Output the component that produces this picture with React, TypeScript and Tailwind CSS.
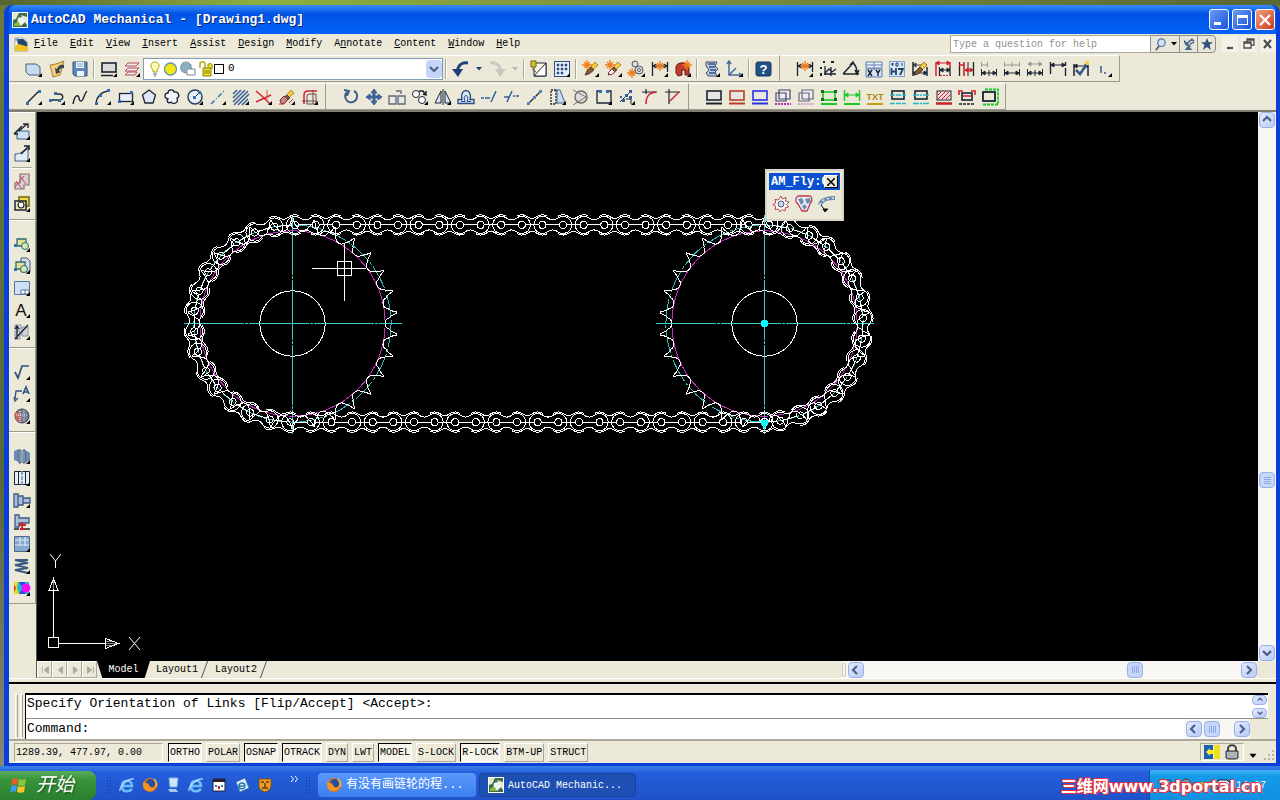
import type { ReactNode } from "react";
import clsx from "clsx";

const INK = "#1b2433";
const STEEL = "#6d8bb0";
const RED = "#cf2030";
const ORANGE = "#f07a18";
const GREEN = "#18c828";
const CYAN = "#28b8c8";

const spark = (x: number, y: number) => (
  <path
    d={`M${x - 5} ${y}h10M${x} ${y - 5}v10M${x - 3} ${y - 3}l6 6M${x - 3} ${y + 3}l6 -6`}
    stroke={ORANGE}
    strokeWidth="1.3"
  />
);

const pencil = (
  <>
    <path d="M6 12l8-9 3 3-9 8-3 1z" fill="#f7cf3c" stroke="#9a6a10" strokeWidth=".8" />
    <path d="M6 12l4-4 3 3-5 4-4 1z" fill="#8b5a2b" stroke={INK} strokeWidth=".7" />
  </>
);

const rectLine = (color: string) => (
  <>
    <rect x="3" y="4" width="14" height="9" fill="#e6e6e2" stroke={color} strokeWidth="1.6" />
    <path d="M2 16.5h16" stroke={color} strokeWidth="2" />
  </>
);

// horizontal dimension: an arrowed line from x1 to x2 at y
const dim = (y: number, x1: number, x2: number, color: string) => (
  <path
    d={`M${x1} ${y}H${x2}M${x1 + 3} ${y - 2}l-3 2 3 2zM${x2 - 3} ${y - 2}l3 2 -3 2z`}
    stroke={color}
    fill={color}
  />
);

const icons: Record<string, ReactNode> = {
  new: <path d="M2 5h10l4 3v8H5l-3-3z" fill="#c9dcef" stroke="#3f5f8c" />,
  open: (
    <>
      <path d="M3 6l6-1 8-3-4 14-7 2z" fill="#f4cf78" stroke="#a7803a" />
      <path d="M17 6c-4-1-6 1-7 4L8 9l1 6 5-2-2-1c0-2 2-3 5-3z" fill="#39465a" />
    </>
  ),
  save: (
    <>
      <path d="M3 3h14v14H5l-2-2z" fill="#5d86bd" stroke="#31547f" />
      <path d="M6 3h8v6H6zM7 12h7v5H7z" fill="#edf3fb" />
      <path d="M7 5h6M7 7h6" stroke="#8aa4c6" />
    </>
  ),
  plot: (
    <>
      <rect x="3" y="4" width="14" height="9" fill="#dcdcd6" stroke={INK} strokeWidth="1.6" />
      <path d="M2 16.5h12" stroke={INK} strokeWidth="1.5" />
    </>
  ),
  layers: (
    <path d="M6 4h11l-3 3H3zM6 9h11l-3 3H3zM6 13h9l-2 3H3z" fill="#f3eaea" stroke="#b5485a" />
  ),
  undo: (
    <>
      <path d="M17 4C11 3 7 6 6.500 12" stroke="#1f3f78" strokeWidth="3" />
      <path d="M1 10h11l-5 8z" fill="#1f3f78" />
    </>
  ),
  redo: (
    <>
      <path d="M3 4c6-1 10 2 10.500 8" stroke="#c9c8c0" strokeWidth="3" />
      <path d="M19 10H8l5 8z" fill="#c9c8c0" />
    </>
  ),
  match: (
    <>
      <path d="M5 4h12v13H5z" fill="#f8f6e6" stroke={INK} />
      <path d="M5 17L17 4v13z" fill="#fff" stroke={INK} />
      <path d="M2 2h5v6H2zM3 10l4 3" fill="#d3c628" stroke="#6c6410" />
    </>
  ),
  grid: (
    <>
      <rect x="2.5" y="2.5" width="15" height="15" fill="#e4edf8" stroke="#2f4f80" />
      <path
        d="M5 5h2v2H5zM9 5h2v2H9zM13 5h2v2h-2zM5 9h2v2H5zM9 9h2v2H9zM13 9h2v2h-2zM5 13h2v2H5zM9 13h2v2H9z"
        fill="#2f4f80"
        stroke="#2f4f80"
        strokeWidth=".5"
      />
    </>
  ),
  sparkPencil: (
    <>
      {spark(6, 6)}
      {pencil}
    </>
  ),
  sparkEraser: (
    <>
      {spark(6, 6)}
      {pencil}
      <path d="M4 14l4-4 3 3-4 3z" fill="#f6f0f0" stroke="#a34" />
    </>
  ),
  sparkGear: (
    <>
      {spark(5, 14)}
      <circle cx="8" cy="5" r="3" fill="#d8dde4" stroke="#555" />
      <circle cx="12" cy="11" r="4" fill="#d8dde4" stroke="#555" />
      <circle cx="12" cy="11" r="1.5" fill="#fff" stroke="#555" />
    </>
  ),
  sparkDim: (
    <>
      <path d="M2.5 3v14M17.5 3v10" stroke={INK} strokeWidth="1.3" />
      {dim(7, 3, 17, INK)}
      {spark(10, 7)}
    </>
  ),
  sparkBlock: (
    <>
      <path d="M3 8c0-5 12-6 13 0v8h-4v-5H9v5l-4 1-2-3z" fill="#c23a2c" stroke="#5e1a14" />
      {spark(14, 6)}
    </>
  ),
  script: (
    <>
      <path d="M4 3h11l-2 4 3 3-3 3 2 4H6l-2-3 3-3-3-4z" fill="#b9cbe2" stroke="#446" />
      <path d="M6 5h7M7 8h6M8 11h6M7 14h6" stroke="#2f4f80" strokeWidth="1.3" />
    </>
  ),
  ucs: <path d="M4 3v13h11M4 16l7-7M2 5l2-3 2 3M14 14l3 2-3 2" stroke="#426b9c" strokeWidth="1.5" />,
  help: (
    <>
      <rect x="2" y="3" width="15" height="14" rx="2" fill="#215082" stroke="#12365e" />
      <text x="9.5" y="14.5" textAnchor="middle" fontSize="13" fontWeight="700" fill="#fff" className="font-['Liberation_Sans',sans-serif]">
        ?
      </text>
    </>
  ),
  ordinate: (
    <>
      <path d="M7 7v9M6 15h12M7 14l4-4 3 3 4-3M13 8v9" stroke={INK} strokeWidth="1.3" />
      <path d="M5 3h2M13 3h3M3 8v2M3 14v3" stroke={INK} strokeWidth="2" />
    </>
  ),
  angle: <path d="M2 15h16M2 15L12 4c3 2 4 6 4 11M9 6l3-3 2 4M14 11l2 4 2-4" stroke={INK} strokeWidth="1.5" />,
  xy: (
    <>
      <path d="M2 3h16v6H2zM2 6h16M10 3v6" fill="#eef4fc" stroke="#5a7fb2" />
      <path d="M2 10h16v8H2z" fill="#d4e2f3" stroke="#5a7fb2" />
      <path d="M4 11l4 6M8 11l-4 6M12 11l2 3 2-3M14 14v3" stroke={INK} strokeWidth="1.4" />
    </>
  ),
  h7: (
    <>
      <rect x="2.5" y="2.5" width="15" height="15" fill="#d9e6f5" stroke="#86a4cb" />
      <path d="M4 5h3M5.5 4v3M9 4h2v3H9zM15 4v3" stroke="#26456f" />
      <path d="M4.5 9v7M9 9v7M5 12.5h4M11 10h5l-3 6" stroke="#26456f" strokeWidth="1.8" />
    </>
  ),
  dimEdit: (
    <>
      <path d="M3 3v14M17 8v9" stroke={INK} strokeWidth="1.5" />
      {dim(6, 3, 17, "#444")}
      {dim(14, 3, 17, INK)}
      {pencil}
    </>
  ),
  dimRedTop: (
    <>
      <path d="M3 3v14M17 3v5" stroke={RED} strokeWidth="1.5" />
      {dim(4, 3, 17, RED)}
      {dim(11, 7, 17, INK)}
      <path d="M6.5 8v9M17 8v9" stroke={INK} strokeWidth="1.3" />
      <path d="M7 16.5h9" stroke={RED} strokeDasharray="2 1" />
    </>
  ),
  dimRedMid: (
    <>
      <path d="M3.5 3v14M17.5 3v14" stroke={INK} strokeWidth="1.3" />
      <path d="M8 3v14M3 6h5" stroke={RED} strokeWidth="1.6" />
      <path d="M12 3v14" stroke={INK} />
      {dim(11, 9, 17, RED)}
    </>
  ),
  dimJoinA: (
    <>
      <path d="M2.5 10v7M17.5 10v7M10 11v6" stroke={INK} />
      <path d="M2.5 3v5M8.500 3v5M3 6h5" stroke="#999" />
      {dim(14, 3, 17, INK)}
    </>
  ),
  dimJoinB: (
    <>
      <path d="M2.5 10v7M17.5 10v7" stroke={INK} />
      <path d="M2.5 3v5M10 3v5M17.5 3v5M3 6h14" stroke="#999" />
      {dim(14, 3, 17, INK)}
    </>
  ),
  dimJoinC: (
    <>
      <path d="M2.5 10v7M17.5 10v7M10 11v6" stroke={INK} />
      {dim(5, 3, 17, "#999")}
      {dim(14, 3, 17, INK)}
    </>
  ),
  dimOpen: (
    <>
      <path d="M2.5 3v12M17.5 3v4M17.5 9v8" stroke={INK} strokeWidth="1.4" />
      {dim(6, 3, 17, INK)}
    </>
  ),
  dimCheck: (
    <>
      <path d="M3 5v12M17 5v12" stroke={INK} strokeWidth="1.5" />
      {dim(7, 3, 17, INK)}
      <path d="M5 11l4 4 7-10" stroke="#34598c" strokeWidth="2.6" />
      <path d="M14 2h4v4h-3z" fill="#f4cf3c" />
    </>
  ),
  corner: <path d="M7 7v7M10 14h2" stroke="#34598c" strokeWidth="1.5" />,
  line: (
    <>
      <path d="M3 16L15 4" stroke={INK} strokeWidth="1.4" />
      <path d="M2 15h3v3H2zM14 3h3v3h-3z" fill="#2f6fb5" />
    </>
  ),
  polyline: (
    <>
      <path d="M4 13h8c5 0 5-6 0-6H8" stroke={INK} strokeWidth="1.4" />
      <path d="M2 12h3v3H2zM11 12h3v3h-3zM7 5h3v3H7z" fill="#2f6fb5" />
    </>
  ),
  spline: <path d="M3 17c1-6 3-9 5-8s0 5 3 5 3-8 6-10" stroke={INK} strokeWidth="1.4" />,
  arc: (
    <>
      <path d="M3 16c1-7 5-11 12-12" stroke={INK} strokeWidth="1.4" />
      <path d="M2 15h3v3H2zM6 7h3v3H6zM14 2h3v3h-3z" fill="#2f6fb5" />
    </>
  ),
  rect: (
    <>
      <rect x="3.5" y="6.5" width="13" height="8" fill="#e8eff8" stroke={INK} strokeWidth="1.3" />
      <path d="M2 13h3v3H2zM14 4h3v3h-3z" fill="#2f6fb5" />
    </>
  ),
  polygon: <path d="M10 3l6.5 5-2.5 8H6L3.500 8z" fill="#dce8f6" stroke={INK} strokeWidth="1.3" />,
  cloud: (
    <path d="M6 12c-4-1-4-6 0-6 0-4 6-4 6-1 5-1 6 5 3 6 2 5-4 7-6 4-3 2-5-1-3-3z" fill="#f2f5fa" stroke={INK} strokeWidth="1.3" />
  ),
  circle: (
    <>
      <circle cx="10" cy="10" r="7" fill="#e8eff8" stroke="#27405f" strokeWidth="1.5" />
      <path d="M10 10l4-4" stroke={INK} />
      <path d="M8 9h3v3H8zM13 4h3v3h-3z" fill="#2f6fb5" />
    </>
  ),
  construction: <path d="M3 17L17 3" stroke="#2f6fb5" strokeWidth="1.4" strokeDasharray="5 2 1 2" />,
  hatch: <path d="M2 7l4-4M2 11l8-8M2 15l12-12M3 18L17 4M7 18L18 7M11 18l6-6" stroke="#3e6598" strokeWidth="1.6" />,
  trim: (
    <>
      <path d="M2 4l7 6 7 7M2 15l15-7" stroke={RED} strokeWidth="1.5" />
      <path d="M13 3v12" stroke="#d66" strokeWidth="1.2" />
    </>
  ),
  eraser: (
    <>
      {pencil}
      <path d="M3 13l4-4 4 3-4 5-3-1z" fill="#c88" stroke="#733" />
      <path d="M2 17h5M12 16l4-4" stroke={RED} />
    </>
  ),
  fillet: (
    <>
      <path d="M4 17V8c0-3 2-4 4-4h9" stroke={RED} strokeWidth="1.5" />
      <path d="M7 17V8l2-1h7v10zM2 14h15M13 3v14" stroke="#6b4a4a" />
    </>
  ),
  rotate: <path d="M6 5a6 6 0 1 0 7 -1M3 3l5 1-2 5" stroke="#3e5f87" strokeWidth="2" />,
  move: <path d="M10 2l3 4h-2v3h3V7l4 3-4 3v-2h-3v3h2l-3 4-3-4h2v-3H6v2l-4-3 4-3v2h3V6H7z" fill="#3e6598" stroke="#3e6598" />,
  scale: <path d="M2 9h7v8H2zM11 9h7v8h-7zM9 4h5v3" fill="#e9e9e4" stroke="#5c6778" strokeWidth="1.3" />,
  copy: (
    <>
      <circle cx="6" cy="7" r="3.5" fill="#fff" stroke={INK} />
      <circle cx="12" cy="13" r="3.5" fill="#fff" stroke={INK} />
      <path d="M9 4h4l2 3M13 7l3 1V4" stroke={INK} strokeWidth="1.4" />
    </>
  ),
  mirror: <path d="M8 4v12H2zM12 4v12h6zM10 2v16" fill="#d8e4f3" stroke={INK} />,
  offset: (
    <>
      <path d="M2 16.500h16v-4h-4c3-12-11-12-8 0H2z" fill="#d8e4f3" stroke="#2c4f80" strokeWidth="1.4" />
      <path d="M5 14.500h4c-3-8 5-8 2 0h4" stroke="#2c4f80" />
    </>
  ),
  extend: <path d="M2 11h3M6 11h5M12 15L17 4" stroke="#2f5f9c" strokeWidth="1.5" />,
  breakLine: <path d="M2 10h5M11 9h2M14 9h3M5 15L10 4" stroke="#2f5f9c" strokeWidth="1.5" />,
  stretch: (
    <>
      <path d="M3 17L16 4" stroke={INK} strokeWidth="1.3" />
      <path d="M2 15h3v3H2zM14 3h3v3h-3zM8 9h3v3H8z" fill="#5a82b8" />
    </>
  ),
  taper: (
    <>
      <path d="M8 3H3v14h5z" stroke={INK} strokeDasharray="2 1" strokeWidth="1.3" />
      <path d="M9 3h3l5 13H9z" fill="#cfdcec" stroke="#3e6598" />
    </>
  ),
  trimCircle: (
    <>
      <circle cx="10" cy="10" r="6" fill="#ddd" stroke="#666" strokeWidth="1.3" />
      <path d="M2 3l13 7-13 8" stroke="#777" />
    </>
  ),
  box: (
    <>
      <path d="M6 4H3v12h14V4h-3" stroke={INK} strokeWidth="1.3" />
      <path d="M5 3h3v3H5zM12 3h3v3h-3z" fill="#2f6fb5" />
    </>
  ),
  explode: (
    <>
      <path d="M3 15L14 4M9 12h5v5" stroke={INK} />
      <path d="M5 12h3v3H5zM8 7h3v3H8zM12 9h3v3h-3zM3 9h2v2H3zM12 3h3v3h-3z" fill="#2f5f9c" />
    </>
  ),
  filletArc: (
    <>
      <path d="M2 5h15M6 2v5" stroke={INK} strokeWidth="1.2" />
      <path d="M6 17C6 9 9 6 16 5" stroke={RED} strokeWidth="1.5" />
    </>
  ),
  chamfer: (
    <>
      <path d="M2 5h15M6 2v15" stroke={INK} strokeWidth="1.2" />
      <path d="M7 14l9-9" stroke={RED} strokeWidth="1.5" />
    </>
  ),
  rectBlack: rectLine(INK),
  rectRed: rectLine("#b8402c"),
  rectBlue: rectLine("#2c30e0"),
  rectPurple: (
    <>
      <path d="M6 3h11v9H6zM3 6h10v8H3z" fill="#eee" stroke="#446" strokeWidth="1.2" />
      <path d="M2 17h16" stroke="#b030c0" strokeWidth="2" strokeDasharray="2 1" />
    </>
  ),
  rectGrey: (
    <>
      <path d="M6 3h11v9H6zM3 6h10v8H3z" fill="#eee" stroke="#667" strokeWidth="1.2" />
      <path d="M2 17h16" stroke="#c060d0" strokeDasharray="2 1" />
    </>
  ),
  rectGreen: (
    <>
      <rect x="4" y="5" width="12" height="8" stroke={GREEN} strokeWidth="1.6" />
      <path d="M2 3h3v3H2zM15 3h3v3h-3zM2 11h3v3H2zM15 11h3v3h-3z" fill="#156820" />
      <path d="M2 17h16" stroke={GREEN} strokeWidth="2" />
    </>
  ),
  dimGreen: (
    <>
      <path d="M2.5 3v11M17.5 3v11" stroke={GREEN} strokeWidth="1.5" />
      {dim(8, 3, 17, GREEN)}
      <path d="M2 17h16" stroke={GREEN} strokeWidth="2" />
    </>
  ),
  txt: (
    <>
      <text x="10" y="13" textAnchor="middle" fontSize="9" fontWeight="700" fill="#a88c10" className="font-['Liberation_Sans',sans-serif]">
        TXT
      </text>
      <path d="M2 17h16" stroke="#c0a010" strokeWidth="2" />
    </>
  ),
  centerA: (
    <>
      <rect x="4" y="4" width="12" height="8" stroke={INK} strokeWidth="1.6" />
      <path d="M2 8h16M2 16.500h16" stroke={CYAN} strokeWidth="1.6" strokeDasharray="5 1" />
    </>
  ),
  centerB: (
    <>
      <rect x="4" y="4" width="12" height="8" stroke={INK} strokeWidth="1.6" />
      <path d="M2 8h16M2 16.500h16" stroke={CYAN} strokeWidth="1.6" strokeDasharray="6 1 2 1" />
    </>
  ),
  hatchRed: (
    <>
      <rect x="3" y="4" width="14" height="9" fill="#f4dada" stroke={INK} />
      <path d="M4 12l7-7M8 12l7-7M12 12l4-4M4 8l3-3" stroke={RED} />
      <path d="M2 16.5h16" stroke={RED} strokeWidth="2.5" />
    </>
  ),
  dimRed: (
    <>
      <rect x="5" y="6" width="10" height="7" stroke={INK} strokeWidth="1.6" />
      <path d="M2 3v5M18 3v5M3 4h3M14 4h3M6 9h8" stroke={RED} strokeWidth="1.6" />
      <path d="M2 17h16" stroke={INK} strokeDasharray="3 1" strokeWidth="1.6" />
    </>
  ),
  viewport: (
    <>
      <rect x="3" y="5" width="12" height="9" stroke={INK} strokeWidth="1.8" />
      <path d="M5 2.500h13v15H3" stroke={GREEN} strokeWidth="1.8" strokeDasharray="3 1" />
    </>
  ),
  viewA: (
    <>
      <path d="M5 9h12v8H5z" fill="#cfe0f2" stroke="#3e5f87" />
      <path d="M2 12l8-8M7 9l8-7M2 12h4M11 2h5v4" stroke={INK} strokeWidth="1.4" />
    </>
  ),
  viewB: (
    <>
      <path d="M3 10c7 0 8-4 13-5v12H3z" fill="#e4edf7" stroke="#3e5f87" />
      <path d="M9 10l7-7M12 2h5v4" stroke={INK} strokeWidth="1.6" />
    </>
  ),
  blocks: (
    <>
      <path d="M8 2h9v11h-5v4H3v-6h5z" fill="#d8cfd6" stroke="#8d7078" strokeWidth="1.2" />
      <path d="M4 9l6 8M8 4l6 8M3 15l9-11" stroke="#c0485a" />
    </>
  ),
  detail: (
    <>
      <path d="M7 3h10v9H7z" fill="#e9dc50" stroke="#6c6410" strokeWidth="1.5" />
      <path d="M3 7h11v9H3z" fill="#f3edb0" stroke={INK} strokeWidth="1.5" />
      <circle cx="9" cy="11" r="3" fill="#fff" stroke={INK} strokeWidth="1.2" />
    </>
  ),
  insertBlock: (
    <>
      <path d="M5 5h9v7H5z" fill="#e6df9a" stroke="#276c74" strokeWidth="1.3" />
      <circle cx="13" cy="12" r="3.5" fill="#dbe6b0" stroke="#276c74" />
      <path d="M2 10h3v3H2z" fill="#2f6fb5" />
    </>
  ),
  makeBlock: (
    <>
      <path d="M9 2h6l3 3v11H9z" fill="#cfdff2" stroke="#557" />
      <path d="M4 6h9v7H4z" fill="#e6df9a" stroke="#276c74" strokeWidth="1.3" />
      <circle cx="12" cy="13" r="3.5" fill="#dbe6b0" stroke="#276c74" />
      <path d="M2 12h3v3H2z" fill="#2f6fb5" />
    </>
  ),
  sheet: (
    <>
      <path d="M2.5 3.5h15v13h-15z" fill="#cfe0f4" stroke="#55779f" />
      <path d="M9 12h8v4H9zM13 12v4" fill="#fff" stroke="#55779f" />
    </>
  ),
  letterA: (
    <text x="9" y="16" textAnchor="middle" fontSize="17" fill="#111" className="font-['Liberation_Sans',sans-serif]">
      A
    </text>
  ),
  table: (
    <>
      <path d="M3 3h6v4H3zM10 5h6v9h-6zM3 9h5v8H3z" fill="#cfd6de" stroke="#8d97a5" />
      <path d="M3 17L16 3M5 5v12M3 7l2-3 2 3" stroke={INK} strokeWidth="1.3" />
    </>
  ),
  surface: <path d="M3 10l3 6L10 4h7" stroke="#33507c" strokeWidth="1.7" />,
  leader: (
    <>
      <path d="M3 15l1-8h6M2 13l1 4 3-3" stroke="#33507c" strokeWidth="1.3" />
      <path d="M11 10l3-7 3 7M12 8h4" stroke="#33507c" strokeWidth="1.6" />
    </>
  ),
  partRef: (
    <>
      <circle cx="10" cy="10" r="7" fill="#6f7f97" stroke="#39435a" />
      <path d="M2 8l6-4 2 13-6-3z" fill="#d6685c" opacity=".8" />
      <path d="M8 5v12M12 4v12M4 9h12" stroke="#e8edf5" strokeDasharray="1 1" />
    </>
  ),
  bolt: (
    <>
      <path d="M2 5l5-2v13l-5-2zM13 4l5 3v7l-5 3z" fill={STEEL} />
      <path d="M7 4h2v13H7zM11 4h2v13h-2z" fill="#b9cbe2" stroke="#3c5a82" />
    </>
  ),
  hole: (
    <>
      <path d="M2.5 3.500h15v13h-15z" fill="#e9eef5" stroke={INK} />
      <path d="M6.500 3v14M13.500 3v14" stroke={INK} />
      <path d="M10 3v14" stroke={STEEL} strokeWidth="1.5" strokeDasharray="4 1" />
    </>
  ),
  screw: <path d="M2 4h4v2h5v2h7v5h-7v2H6v2H2zM6 6v9M11 8v5" fill="#a9bfdb" stroke="#3c5a82" strokeWidth="1.3" />,
  pin: (
    <>
      <path d="M3 3h4v3h10v5H7v4H3z" fill="#a9bfdb" stroke="#3c5a82" strokeWidth="1.3" />
      <path d="M2 17h5M13 17h5" stroke={INK} strokeWidth="1.3" />
      <path d="M10 10v7M7 13h7M8 17h5" stroke={RED} strokeWidth="1.8" />
    </>
  ),
  steel: (
    <>
      <path d="M2.5 2.500h15v15h-15z" fill="#8aa8cc" stroke="#4a6a92" />
      <path d="M3 6h14M3 11h14M8 3v9M13 3v9" stroke="#dce8f6" strokeWidth="1.2" />
    </>
  ),
  spring: <path d="M3 4l13 3L3 9l13 3-13 2 13 3M3 4h13" stroke="#3c5a82" strokeWidth="2" />,
  fea: (
    <>
      <path d="M2 4h15v12H2z" fill="#20b8d8" />
      <path d="M2 4h4l-1 6 2 6H2z" fill="#f0d820" />
      <path d="M2 7l2 3-2 4z" fill="#d03020" />
      <path d="M7 16l4-6-4-6h6v12z" fill="#2848d8" />
      <circle cx="14" cy="10" r="4.5" fill="#f010f0" />
    </>
  ),
  sprocket: (
    <>
      <path
        d="M10 2l1.500 3 3.500-1.500-.5 3.500 3.500 1-2.500 2.500 2 2.500-3.200.7-.3 3.300-2.800-1.500-2.200 2.500-1.500-3-3.500.5.800-3.300-3-1.700 3-1.500-.8-3.500 3.300.5z"
        fill="#fff"
        stroke="#b04848"
      />
      <circle cx="10" cy="10" r="3" fill="#c8d8ea" stroke="#557" />
    </>
  ),
  belt: (
    <>
      <path d="M4 2h12c3 2 2 6 0 8l-3 7H8L4 10C1 8 1 4 4 2z" fill="#e8eef6" stroke="#c03848" strokeWidth="1.3" />
      <path d="M4 5l4-1 2 4-3 3zM11 5l5-1 1 4-4 2zM8 12l3-2 2 3-3 3z" fill="#6d8bb0" />
    </>
  ),
  chain: (
    <>
      <path d="M3 11C4 6 9 4 18 4" stroke="#6d8bb0" strokeWidth="4" />
      <path d="M3 11C4 6 9 4 18 4" stroke="#dfe9f7" strokeWidth="1.5" strokeDasharray="2 3" />
      <path d="M4 11l3 4M6 15h5l-3 3z" stroke="#111" fill="#111" />
    </>
  ),
};

const flyouts = new Set(
  (
    "new plot layers grid sparkPencil sparkEraser sparkGear sparkDim sparkBlock script ucs corner line polyline arc rect " +
    "circle construction hatch trim eraser fillet copy mirror taper box explode viewA viewB detail insertBlock makeBlock " +
    "sheet letterA table surface leader partRef bolt hole screw steel spring fea"
  ).split(" "),
);

function ToolIcon({ name }: { name: string }) {
  return (
    <svg viewBox="0 0 20 20" className="block size-5" fill="none" aria-hidden="true">
      {icons[name]}
      {flyouts.has(name) && <path d="M18 14v4h-4z" fill="#000" />}
    </svg>
  );
}

function ToolButton({ name, vertical }: { name: string; vertical?: boolean }) {
  return (
    <button
      type="button"
      aria-label={name}
      className={clsx("flex shrink-0 items-center justify-center", vertical ? "h-[22px] w-6" : "h-6 w-[23px]")}
    >
      <ToolIcon name={name} />
    </button>
  );
}

function Divider() {
  return <span className="mx-[2px] h-5 w-[2px] shrink-0 border-l border-[#aca899] bg-white" />;
}

function Toolbar({ children }: { children: ReactNode }) {
  return (
    <div className="flex h-[27px] items-center border-t border-r border-b border-t-white border-r-[#9d9a8c] border-b-[#9d9a8c] pr-1 pl-[13px]">
      {children}
    </div>
  );
}

const tools = (names: string) => names.split(" ").map((n) => <ToolButton key={n} name={n} />);

function Caret({ className }: { className?: string }) {
  return (
    <svg viewBox="0 0 6 4" className={clsx("h-1 w-1.5", className)} fill="currentColor" aria-hidden="true">
      <path d="M0 0h6L3 3.500z" />
    </svg>
  );
}

function LayerSelect() {
  return (
    <div className="flex h-[22px] w-[300px] shrink-0 items-center border border-[#7f9db9] bg-white pl-1">
      <svg viewBox="0 0 66 18" className="h-[18px] w-[66px] shrink-0" fill="none" aria-hidden="true">
        <path d="M7 2c5 0 5 5 2 8v2H5v-2C2 7 2 2 7 2z" fill="#fff9b0" stroke="#a8a020" />
        <path d="M5 14h4M6 16h2" stroke="#666" />
        <circle cx="22.500" cy="9" r="6" fill="#f2e818" stroke="#6a94a8" strokeWidth="1.3" />
        <circle cx="38" cy="7.500" r="5.500" fill="#8ab0c0" stroke="#5b7f90" strokeDasharray="2 1" />
        <path d="M41 9h6v6h-8v-3" fill="#fff" stroke="#789" />
        <path d="M52 8V4c0-3 5-3 5 0v4" stroke="#b8a820" strokeWidth="1.6" />
        <path d="M55 8h8v8h-8zM60 8V5c0-2 4-2 4 0v4" fill="#f0e020" stroke="#8a8010" />
        <path d="M56 11h6M56 13h6" stroke="#8a8010" />
      </svg>
      <span className="size-[10px] shrink-0 border border-black bg-white" />
      <select
        aria-label="Layer"
        className="h-full min-w-0 flex-1 appearance-none bg-transparent pl-1 text-[11px] leading-none text-black outline-none"
        defaultValue="0"
      >
        <option>0</option>
      </select>
      <span className="pointer-events-none flex h-[18px] w-4 items-center justify-center rounded-sm bg-[#c4d4fb]">
        <Chevron dir="down" />
      </span>
    </div>
  );
}

const chevrons = {
  up: "M1 6l4-4 4 4",
  down: "M1 3l4 4 4-4",
  left: "M6 1L2 5l4 4",
  right: "M3 1l4 4-4 4",
};

function Chevron({ dir, small }: { dir: keyof typeof chevrons; small?: boolean }) {
  return (
    <svg viewBox="0 0 10 10" className={small ? "size-[6px]" : "size-[10px]"} fill="none" aria-hidden="true">
      <path d={chevrons[dir]} stroke="#4d6185" strokeWidth="2.2" />
    </svg>
  );
}

function ScrollButton({ dir, small }: { dir: keyof typeof chevrons; small?: boolean }) {
  return (
    <button
      type="button"
      aria-label={`Scroll ${dir}`}
      className={clsx(
        "flex shrink-0 items-center justify-center rounded-sm border border-[#98b0e8] bg-linear-to-br from-[#e3ebfe] to-[#b9cbf8]",
        small ? "h-[10px] w-[15px]" : "size-4",
      )}
    >
      <Chevron dir={dir} small={small} />
    </button>
  );
}

function Thumb({ vertical }: { vertical?: boolean }) {
  return (
    <span className="flex size-4 shrink-0 items-center justify-center rounded-sm border border-[#98b0e8] bg-[#c8d6fb]">
      <span className={clsx("flex gap-px", vertical && "flex-col")}>
        {[0, 1, 2, 3].map((i) => (
          <span key={i} className={clsx("bg-[#8ca8e8]", vertical ? "h-px w-[7px]" : "h-[7px] w-px")} />
        ))}
      </span>
    </span>
  );
}

function AppIcon() {
  return (
    <svg viewBox="0 0 16 16" className="size-4 shrink-0" aria-hidden="true">
      <rect width="16" height="16" fill="#fff" />
      <rect x="1" y="1" width="14" height="14" fill="#3f6a50" />
      <path d="M1 1h6l-3 6-3 1zM9 3l6 2v8l-4-5z" fill="#dfeacb" />
      <path d="M6 6c3-2 7 0 7 4l-4 4-4-3z" fill="#f1f5ee" />
      <path d="M2 12l4-3 3 5H2z" fill="#8ab83c" />
    </svg>
  );
}

// label and index of its underlined access key
const menus: [string, number][] = [
  ["File", 0],
  ["Edit", 0],
  ["View", 0],
  ["Insert", 0],
  ["Assist", 0],
  ["Design", 0],
  ["Modify", 0],
  ["Annotate", 1],
  ["Content", 0],
  ["Window", 0],
  ["Help", 0],
];

function TitleBar() {
  const control = "flex h-[21px] w-5 items-center justify-center rounded-[3px] border border-white";
  return (
    <header className="flex h-[29px] shrink-0 items-center rounded-t-md bg-linear-to-b from-[#3a8cf8] via-[#0053e4] via-30% to-[#0262fb] pr-px pl-[3px]">
      <AppIcon />
      <h1 className="ml-[3px] flex-1 truncate text-[13px] font-bold text-white [text-shadow:1px_1px_#0a246a]">
        AutoCAD Mechanical - [Drawing1.dwg]
      </h1>
      <div className="flex gap-[3px]">
        <button type="button" aria-label="Minimize" className={clsx(control, "bg-linear-to-br from-[#6a9bf8] to-[#1c4fd8]")}>
          <span className="mt-2 mr-1 h-[3px] w-[7px] bg-white" />
        </button>
        <button type="button" aria-label="Maximize" className={clsx(control, "bg-linear-to-br from-[#6a9bf8] to-[#1c4fd8]")}>
          <span className="h-[10px] w-[11px] border border-t-[3px] border-white" />
        </button>
        <button type="button" aria-label="Close" className={clsx(control, "bg-linear-to-br from-[#f0a080] to-[#c8371a]")}>
          <svg viewBox="0 0 12 12" className="size-3" stroke="#fff" strokeWidth="2.2">
            <path d="M1 1l10 10M11 1L1 11" />
          </svg>
        </button>
      </div>
    </header>
  );
}

function MenuBar() {
  return (
    <nav className="flex h-5 shrink-0 items-center bg-[#ece9d8] pl-[5px]">
      <svg viewBox="0 0 16 16" className="mr-[5px] size-[15px]" aria-hidden="true">
        <path d="M1 1h9l4 4v10H1z" fill="#fff" stroke="#9aa" />
        <path d="M4 2h6l4 4v6H4z" fill="#26466e" />
        <path d="M1 10c5-5 7 0 14 0v5H1z" fill="#f2c224" />
        <path d="M1 3h5M3.500 1v5" stroke="#2f6fb5" />
      </svg>
      <div className="flex flex-1 gap-3">
        {menus.map(([label, key]) => (
          <button key={label} type="button" className="text-[10px] leading-4">
            {label.slice(0, key)}
            <span className="underline">{label[key]}</span>
            {label.slice(key + 1)}
          </button>
        ))}
      </div>
      <input
        aria-label="Type a question for help"
        placeholder="Type a question for help"
        className="h-[18px] w-[200px] border border-r-0 border-[#aca899] bg-white px-[2px] text-[10px] outline-none placeholder:text-[#8f8f8f]"
      />
      <div className="flex h-[18px] rounded-r-sm border border-[#8f8f8a] bg-[#e9e7da]">
        <button type="button" aria-label="Search" className="flex w-7 items-center justify-center gap-1">
          <svg viewBox="0 0 14 14" className="size-[13px]" fill="none" aria-hidden="true">
            <path d="M2 13l4-5" stroke="#667" strokeWidth="2" />
            <circle cx="8" cy="5" r="4" fill="#cfe2f8" stroke="#5577a5" strokeWidth="1.3" />
          </svg>
          <Caret />
        </button>
        <button type="button" aria-label="Communication center" className="flex w-[18px] items-center justify-center border-l border-[#8f8f8a]">
          <svg viewBox="0 0 14 14" className="size-3" fill="none" aria-hidden="true">
            <path d="M1 2c0 6 4 9 9 8zM7 10l4 4H2l3-4z" fill="#4b648a" />
            <path d="M5 6l6-5M8 7l5-2M10 1l3 3" stroke="#4b648a" strokeWidth="1.6" />
          </svg>
        </button>
        <button type="button" aria-label="Favorites" className="flex w-[18px] items-center justify-center border-l border-[#8f8f8a]">
          <svg viewBox="0 0 14 14" className="size-3" fill="#34507c" aria-hidden="true">
            <path d="M7 0l2 5h5l-4 3 1.500 6L7 10.500 2.500 14 4 8 0 5h5z" />
          </svg>
        </button>
      </div>
      <div className="ml-[6px] flex gap-[3px]">
        {["M4 11h6", "M5 5V2h7v6h-3M2 5h7v6H2zM2 6h7M5 3h7", "M3 3l7 8M10 3l-7 8"].map((d, i) => (
          <button
            key={d}
            type="button"
            aria-label={["Minimize drawing", "Restore drawing", "Close drawing"][i]}
            className="flex size-4 items-center justify-center bg-[#f3f1e8]"
          >
            <svg viewBox="0 0 14 14" className="size-[14px]" fill="none" stroke="#4d4d4d" strokeWidth={i === 1 ? 1.3 : 2.2}>
              <path d={d} />
            </svg>
          </button>
        ))}
      </div>
    </nav>
  );
}

function Toolbars() {
  return (
    <div className="flex shrink-0 flex-col gap-px border-b-2 border-[#807d72] bg-[#ece9d8] pt-px">
      <div className="flex">
        <Toolbar>
          {tools("new open save")}
          <Divider />
          {tools("plot layers")}
          <LayerSelect />
          <Divider />
          {tools("undo")}
          <button type="button" aria-label="Undo list" className="flex w-[13px] justify-center text-[#1f3f78]">
            <Caret />
          </button>
          {tools("redo")}
          <button type="button" aria-label="Redo list" className="flex w-[13px] justify-center text-[#b9b8b0]">
            <Caret />
          </button>
          <Divider />
          {tools("match grid")}
          <Divider />
          {tools("sparkPencil sparkEraser sparkGear sparkDim sparkBlock")}
          <Divider />
          {tools("script ucs")}
          <Divider />
          {tools("help")}
        </Toolbar>
        <Toolbar>
          {tools("sparkDim ordinate angle xy h7 dimEdit dimRedTop dimRedMid dimJoinA dimJoinB dimJoinC dimOpen dimCheck corner")}
        </Toolbar>
      </div>
      <div className="flex">
        <Toolbar>{tools("line polyline spline arc rect polygon cloud circle construction hatch trim eraser fillet")}</Toolbar>
        <Toolbar>
          {tools("rotate move scale copy mirror offset extend breakLine stretch taper trimCircle box explode filletArc chamfer")}
        </Toolbar>
        <Toolbar>
          {tools("rectBlack rectRed rectBlue rectPurple rectGrey rectGreen dimGreen txt centerA centerB hatchRed dimRed viewport")}
        </Toolbar>
      </div>
    </div>
  );
}

const sideGroups = [
  "viewA viewB | blocks detail",
  "insertBlock makeBlock sheet letterA table",
  "surface leader partRef",
  "bolt hole screw pin steel spring fea",
];

function SideBar() {
  return (
    <aside className="w-[27px] shrink-0 bg-[#ece9d8]">
      {sideGroups.map((group, g) => (
        <div
          key={group}
          className={clsx(
            "flex flex-col items-center border-t border-r border-b border-t-white border-r-[#9d9a8c] border-b-[#9d9a8c] pb-1",
            g === 0 ? "pt-2" : "pt-3",
          )}
        >
          {group.split(" ").map((n) =>
            n === "|" ? (
              <span key={n} className="my-[2px] h-[2px] w-5 border-t border-[#aca899] bg-white" />
            ) : (
              <ToolButton key={n} name={n} vertical />
            ),
          )}
        </div>
      ))}
    </aside>
  );
}

// Chain drive geometry, in drawing units
const PITCH = 20.62;
const PITCH_R = 98.6;
const ROOT_R = 92.7;
const TIP_R = 105;
const TEETH = 30;
const CY = 323.5;
const LEFT_CX = 292.5;
const RIGHT_CX = 764.5;

type Point = [number, number];

const polar = (cx: number, r: number, deg: number): Point => {
  const a = (deg * Math.PI) / 180;
  return [cx + r * Math.cos(a), CY + r * Math.sin(a)];
};

const fmt = ([x, y]: Point) => `${x.toFixed(2)} ${y.toFixed(2)}`;

const chainPins: Point[] = [
  ...Array.from({ length: 24 }, (_, i): Point => [RIGHT_CX - i * PITCH, CY + PITCH_R]),
  ...Array.from({ length: 14 }, (_, i) => polar(LEFT_CX, PITCH_R, 91.4 + (i + 1) * 12)),
  ...Array.from({ length: 24 }, (_, i): Point => [295 + i * PITCH, CY - PITCH_R]),
  ...Array.from({ length: 14 }, (_, i) => polar(RIGHT_CX, PITCH_R, -87.2 + (i + 1) * 12)),
];

const innerPlate = (len: number) => {
  const m = len / 2;
  const e = len - 5;
  return `M5 -7Q${m} -3 ${e} -7A8.600 8.600 0 1 1 ${e} 7Q${m} 3 5 7A8.600 8.600 0 1 1 5 -7Z`;
};

const outerPlate = (len: number) => {
  const m = len / 2;
  const e = len - 6;
  return (
    `M-5 -8.700A10 10 0 0 1 6 -8Q${m} -5 ${e} -8A10 10 0 0 1 ${len + 5} -8.700` +
    `M-5 8.700A10 10 0 0 0 6 8Q${m} 5 ${e} 8A10 10 0 0 0 ${len + 5} 8.700`
  );
};

function Chain() {
  return (
    <g stroke="#fff">
      {chainPins.map(([x, y], i) => {
        const [nx, ny] = chainPins[(i + 1) % chainPins.length];
        const len = Math.hypot(nx - x, ny - y);
        const angle = (Math.atan2(ny - y, nx - x) * 180) / Math.PI;
        return (
          <g key={i} transform={`translate(${x} ${y}) rotate(${angle})`}>
            <circle r="3.500" />
            <path d={i % 2 === 0 ? innerPlate(len) : outerPlate(len)} />
            <path d={`M3 0H${len - 3}`} />
          </g>
        );
      })}
    </g>
  );
}

function Sprocket({ cx }: { cx: number }) {
  let teeth = "";
  for (let i = 0; i < TEETH; i++) {
    const t = 6 + (i * 360) / TEETH;
    const p = (r: number, off: number) => fmt(polar(cx, r, t + off));
    teeth += `${i ? "L" : "M"}${p(ROOT_R, -6)}Q${p(ROOT_R, -3.4)} ${p(97, -2.7)}Q${p(99, -1.2)} ${p(TIP_R, -0.3)}`;
    teeth += `L${p(TIP_R, 0.3)}Q${p(99, 1.2)} ${p(97, 2.7)}Q${p(ROOT_R, 3.4)} ${p(ROOT_R, 6)}`;
  }
  return (
    <>
      <circle cx={cx} cy={CY} r={ROOT_R} stroke="#c030c0" />
      <circle cx={cx} cy={CY} r={PITCH_R} stroke="#30b8b8" strokeDasharray="24 2 3 2" />
      <path d={teeth} stroke="#fff" />
      <circle cx={cx} cy={CY} r="32.700" stroke="#fff" />
      <path
        d={`M${cx - 109} ${CY}H${cx + 109}M${cx} ${CY - 109}V${CY + 110}`}
        stroke="#40d0d0"
        strokeDasharray="60 1 3 1"
      />
    </>
  );
}

function Drawing() {
  return (
    <svg className="absolute inset-0 size-full" fill="none" shapeRendering="crispEdges" role="img" aria-label="Chain drive">
      <g transform="translate(-37 -112)">
        <Sprocket cx={LEFT_CX} />
        <Sprocket cx={RIGHT_CX} />
        <Chain />
        <path d="M762 320h5v7h-5zM761 321h7v5h-7zM761 420h7v5h-7zM763 425h3v3h-3z" fill="#00ffff" />
        <path d="M312 268.500h54M344.500 244v57M337.500 261.500h14v14h-14z" stroke="#fff" />
      </g>
    </svg>
  );
}

function UcsIcon() {
  return (
    <svg viewBox="0 0 96 100" className="absolute bottom-2 left-2 h-[100px] w-24" fill="none" stroke="#fff" aria-hidden="true">
      <g shapeRendering="crispEdges">
        <path d="M3.500 84.500h10v10h-10zM8.500 84V25M14 90.500h58" />
        <path d="M8.500 25.500l-4.500 12h9zM60.500 85.500v10l13-5z" />
        <path d="M8.500 28v8M61 90.500h10M61 88.500h6M61 92.500h6" stroke="#888" />
      </g>
      <path d="M5 1l5.500 7L16 1M10.500 8v7M84 84l11 13M95 84L84 97" />
    </svg>
  );
}

function FlyToolbar() {
  return (
    <div className="absolute top-[57px] left-[728px] w-[79px] border-2 border-[#d8d5c8] bg-[#ece9d8] p-[2px]">
      <div className="flex h-[17px] items-center bg-[#0a50d0] pr-[2px] pl-[2px]">
        <span className="w-0 flex-1 overflow-hidden text-xs leading-4 font-bold whitespace-nowrap text-white">AM_Fly:G</span>
        <button
          type="button"
          aria-label="Close toolbar"
          className="flex h-[13px] w-[14px] shrink-0 items-center justify-center border border-white border-r-black border-b-black bg-[#ece9d8]"
        >
          <svg viewBox="0 0 8 8" className="size-2" stroke="#000" strokeWidth="1.5">
            <path d="M0 0l8 8M8 0L0 8" />
          </svg>
        </button>
      </div>
      <div className="flex h-[27px] items-center">{tools("sprocket belt chain")}</div>
    </div>
  );
}

const navArrows = ["M4 3v8M11 3v8L6 7z", "M10 3v8L5 7z", "M5 3v8l5-4z", "M4 3v8l5-4zM11 3v8"];

function LayoutTabs() {
  return (
    <div className="flex h-[17px] shrink-0 items-stretch bg-[#ece9d8]">
      <div className="flex flex-1 items-stretch">
        {navArrows.map((d, i) => (
          <button
            key={d}
            type="button"
            aria-label={["First tab", "Previous tab", "Next tab", "Last tab"][i]}
            className="flex w-[15px] items-center justify-center border border-white border-r-[#aca899] border-b-[#aca899]"
          >
            <svg viewBox="0 0 14 14" className="size-3 shrink-0" fill="#aca899" stroke="#aca899" aria-hidden="true">
              <path d={d} />
            </svg>
          </button>
        ))}
        <button type="button" className="w-[53px] bg-black text-[10px] leading-4 text-white [clip-path:polygon(0_0,100%_0,90%_100%,10%_100%)]">
          Model
        </button>
        {["Layout1", "Layout2"].map((label) => (
          <span key={label} className="flex">
            <button type="button" className="w-[54px] text-[10px] leading-4">
              {label}
            </button>
            <span className="mr-1 w-px -skew-x-[20deg] bg-[#555]" />
          </span>
        ))}
      </div>
      <div className="flex w-[33.5%] items-center bg-[#f8f7f3]">
        <span className="mr-[2px] h-[14px] w-1 rounded-sm border border-[#c9c6b8]" />
        <ScrollButton dir="left" />
        <span className="flex-[70]" />
        <Thumb />
        <span className="flex-[26]" />
        <ScrollButton dir="right" />
      </div>
      <span className="w-[19px]" />
    </div>
  );
}

function CommandWindow() {
  return (
    <section className="shrink-0 bg-[#ece9d8]">
      <div className="h-[6px] border-t border-b-2 border-t-white border-b-black" />
      <div className="flex pt-[9px] pr-2">
        <div className="my-px mr-[2px] ml-1.5 flex w-[8px] gap-[2px]">
          <span className="w-[3px] border border-white border-r-[#aca899]" />
          <span className="w-[3px] border border-white border-r-[#aca899]" />
        </div>
        <div className="flex-1 border-t-2 border-l border-black">
          <div className="flex h-6 border-b border-[#8f8f8a] bg-white">
            <p className="flex-1 overflow-hidden pl-px text-[13px] leading-[18px] whitespace-nowrap">
              Specify Orientation of Links [Flip/Accept] &lt;Accept&gt;:
            </p>
            <div className="flex w-4 flex-col justify-between">
              <ScrollButton dir="up" small />
              <ScrollButton dir="down" small />
            </div>
          </div>
          <div className="flex h-5 items-center">
            <label htmlFor="command" className="h-full bg-white pl-px text-[13px] leading-5">
              Command:
            </label>
            <input id="command" className="h-full min-w-0 flex-1 bg-white px-1 text-[13px] outline-none" />
            <div className="flex h-full w-[66px] items-center bg-[#f8f7f3] pl-[2px]">
              <ScrollButton dir="left" />
              <span className="w-[2px]" />
              <Thumb />
              <span className="flex-1" />
              <ScrollButton dir="right" />
            </div>
            <span className="h-full w-[18px] bg-[#ece9d8]" />
          </div>
        </div>
      </div>
    </section>
  );
}

const modes: [string, boolean][] = [
  ["ORTHO", true],
  ["POLAR", false],
  ["OSNAP", true],
  ["OTRACK", true],
  ["DYN", false],
  ["LWT", false],
  ["MODEL", true],
  ["S-LOCK", false],
  ["R-LOCK", true],
  ["BTM-UP", false],
  ["STRUCT", false],
];

function StatusBar() {
  return (
    <footer className="flex h-6 shrink-0 items-center border-t-2 border-[#aca899] bg-[#ece9d8] pl-[5px] text-[10px] leading-[18px]">
      <output className="mr-[5px] h-[19px] w-[149px] border border-[#aca899] border-r-white border-b-white pl-px">
        1289.39, 477.97, 0.00
      </output>
      <div className="flex flex-1 gap-1">
        {modes.map(([label, on]) => (
          <button
            key={label}
            type="button"
            aria-pressed={on}
            className={clsx(
              "h-[19px] border px-px",
              on ? "border-black border-r-white border-b-white bg-[#f5f3ea]" : "border-white border-r-[#aca899] border-b-[#aca899]",
            )}
          >
            {label}
          </button>
        ))}
      </div>
      <div className="mr-1.5 flex h-[18px] items-center gap-1 border border-[#aca899] border-r-white border-b-white px-[3px]">
        <svg viewBox="0 0 16 14" className="h-[14px] w-4" aria-hidden="true">
          <path d="M0 0h9v14H0z" fill="#1c60b0" />
          <path d="M10 0h6v14h-6z" fill="#f0e020" />
          <path d="M2 7l4-4v2h5v4H6v2z" fill="#f8f020" />
        </svg>
        <svg viewBox="0 0 16 16" className="size-4" fill="none" aria-hidden="true">
          <path d="M4 8V5c0-5 8-5 8 0v3" stroke="#444" strokeWidth="2" />
          <path d="M2 7h12v7l-2 1H4l-2-1z" fill="#8c939b" stroke="#333" />
          <path d="M3 9h10M3 11h10M3 13h10" stroke="#ccd2d8" />
        </svg>
      </div>
      <button type="button" aria-label="Status bar menu" className="mt-2">
        <Caret className="scale-125" />
      </button>
      <svg viewBox="0 0 12 12" className="mt-2 ml-2 size-3" fill="#b8b4a2" aria-hidden="true">
        <path d="M8 0h2v2H8zM4 4h2v2H4zM8 4h2v2H8zM0 8h2v2H0zM4 8h2v2H4zM8 8h2v2H8z" />
      </svg>
    </footer>
  );
}

const ieIcon = (
  <>
    <path d="M3 9h10c0-7-10-7-10 0s7 6 10 3" fill="none" stroke="#6cc0f8" strokeWidth="2.6" />
    <path d="M1 14C0 10 9 1 15 2" fill="none" stroke="#bfe4fc" strokeWidth="1.2" />
  </>
);

const firefoxIcon = (
  <>
    <circle cx="8" cy="8" r="7" fill="#e8701a" />
    <circle cx="8.500" cy="6.500" r="4.500" fill="#27509c" />
    <path d="M1 5c2 2 5 0 6 3s4 3 7 1c-1 6-12 8-13-1z" fill="#f4931e" />
    <path d="M12 2c3 3 3 6 2 8" fill="none" stroke="#f8c030" strokeWidth="1.5" />
  </>
);

const quickLaunch: [string, ReactNode][] = [
  ["Internet Explorer", ieIcon],
  ["Firefox", firefoxIcon],
  [
    "Messenger",
    <>
      <path d="M4 1h9l-1 9H5z" fill="#cfe6fb" stroke="#7fb0e0" />
      <path d="M3 12h8l2 3H5z" fill="#a8ccf0" />
    </>,
  ],
  ["Browser", ieIcon],
  [
    "Calendar",
    <>
      <path d="M2 2h12v12H2z" fill="#fff" stroke="#223" />
      <path d="M2 2h12v3H2z" fill="#223" />
      <path d="M4 8h2v2H4zM10 8h2v2h-2z" fill="#2f6fb5" />
      <path d="M7 9h2v3H7z" fill={RED} />
    </>,
  ],
  [
    "Mail",
    <>
      <path d="M2 5l9-4 4 10-9 4z" fill="#e6f1fb" stroke="#3a7ab8" />
      <path d="M5 9h6c0-4-6-4-6 0s5 3 6 1" fill="none" stroke="#2878b8" strokeWidth="1.5" />
    </>,
  ],
  [
    "Shield",
    <>
      <path d="M2 2h12v7c0 3-3 5-6 6-3-1-6-3-6-6z" fill="#f0a020" stroke="#8a5010" />
      <path d="M4 5h3M9 5h3M8 6v4M5 11h6" stroke="#5c3408" strokeWidth="1.4" />
    </>,
  ],
];

function Grip() {
  return (
    <span className="grid grid-cols-2 gap-[2px]">
      {Array.from({ length: 12 }, (_, i) => (
        <span key={i} className="size-px bg-[#0c3aa0]" />
      ))}
    </span>
  );
}

function Taskbar() {
  return (
    <div className="relative flex h-[34px] shrink-0 items-center bg-linear-to-b from-[#3a80e8] via-[#245edb] via-20% to-[#1f52c8] pt-1 text-white">
      <button
        type="button"
        className="flex h-[29px] w-24 items-center gap-2 self-end rounded-r-lg bg-linear-to-b from-[#5cac5c] via-[#37953a] via-30% to-[#2a7f2c] pl-[10px]"
      >
        <svg viewBox="0 0 18 18" className="size-[18px]" aria-hidden="true">
          <path d="M2 3c2-2 4-2 6-1L7 8C5 7 3 7 1 9z" fill="#f05a28" />
          <path d="M9 2c2 1 4 1 7 0l-1 6c-2 1-5 1-7 0z" fill="#8cc83c" />
          <path d="M1 10c2-2 4-2 6-1l-1 6c-2-1-4-1-6 1z" fill="#3c9cf0" />
          <path d="M8 9c2 1 4 1 7 0l-1 6c-2 1-5 1-7 0z" fill="#f8c820" />
        </svg>
        <span className="text-[19px] leading-6 italic [text-shadow:1px_1px_2px_#1a4a1c]">开始</span>
      </button>
      <span className="mr-2 ml-[11px]">
        <Grip />
      </span>
      <div className="flex gap-[7px]">
        {quickLaunch.map(([label, art]) => (
          <button key={label} type="button" aria-label={label}>
            <svg viewBox="0 0 16 16" className="size-4" aria-hidden="true">
              {art}
            </svg>
          </button>
        ))}
      </div>
      <button type="button" aria-label="More icons" className="mb-3 ml-[17px]">
        <svg viewBox="0 0 8 6" className="h-1.5 w-2" fill="none" stroke="#fff" aria-hidden="true">
          <path d="M1 0l2.500 3L1 6M5 0l2.500 3L5 6" />
        </svg>
      </button>
      <span className="mx-2">
        <Grip />
      </span>
      <button type="button" className="mr-[3px] flex h-6 w-[158px] items-center gap-1 rounded-sm bg-linear-to-b from-[#5a98fa] to-[#3c7ff0] pl-2 text-xs">
        <svg viewBox="0 0 16 16" className="size-4 shrink-0" aria-hidden="true">
          {firefoxIcon}
        </svg>
        <span className="whitespace-nowrap">有没有画链轮的程...</span>
      </button>
      <button type="button" className="flex h-6 w-[157px] items-center gap-1 rounded-sm border border-[#17419a] bg-[#1e50b4] pl-2 text-[10px]">
        <AppIcon />
        <span className="whitespace-nowrap">AutoCAD Mechanic...</span>
      </button>
      <span className="flex-1" />
      <div className="flex h-[30px] w-[131px] items-center gap-1 self-end border-l border-[#0c4fb0] bg-linear-to-b from-[#3cb4f8] via-[#129ae8] via-20% to-[#1290e0] pl-[10px] text-[10px]">
        <svg viewBox="0 0 72 16" className="h-4 w-[72px]" aria-hidden="true">
          <path d="M1 3h9v7H1zM5 11h8v3H5z" fill="#cfdcec" stroke="#123" />
          <circle cx="26" cy="7" r="5" fill="#8a9098" stroke="#445" />
          <path d="M38 9c2-6 10-6 14 0l-7 4z" fill="#a8dc60" stroke="#486" />
          <path d="M58 3h9l3 3v7H58z" fill="#e6eef8" stroke="#123" />
        </svg>
        <time>14:07</time>
      </div>
      <p className="absolute right-[18px] bottom-[3px] font-['DejaVu_Sans','Noto_Sans_CJK_SC',sans-serif] text-base leading-5 font-bold whitespace-nowrap text-white [text-shadow:1px_0_#e8303c,-1px_0_#e8303c,0_1px_#e8303c,0_-1px_#e8303c,1px_1px_#e8303c,-1px_-1px_#e8303c]">
        三维网www.3dportal.cn
      </p>
    </div>
  );
}

export default function App() {
  return (
    <div className="flex h-screen flex-col overflow-hidden bg-linear-to-b from-[#6b7a3c] via-[#59663a] via-60% to-[#8a8a80] font-['Liberation_Mono','Noto_Sans_CJK_SC',monospace] text-black">
      <div className="h-[5px] shrink-0 bg-linear-to-r from-[#56642e] via-[#8fae3e] via-20% to-[#5a6636]" />
      <div className="ml-1 flex min-h-0 flex-1 flex-col rounded-t-lg border-r-4 border-b-[3px] border-l-[5px] border-[#0a3fd8] bg-[#0a3fd8]">
        <TitleBar />
        <MenuBar />
        <Toolbars />
        <div className="flex min-h-0 flex-1">
          <SideBar />
          <main className="flex min-w-0 flex-1 flex-col border-l border-[#555]">
            <div className="flex min-h-0 flex-1">
              <div className="relative flex-1 cursor-crosshair overflow-hidden bg-black">
                <Drawing />
                <UcsIcon />
                <FlyToolbar />
              </div>
              <div className="flex w-[18px] flex-col items-center bg-[#f8f7f3]">
                <ScrollButton dir="up" />
                <span className="flex-[68]" />
                <Thumb vertical />
                <span className="flex-[31]" />
                <ScrollButton dir="down" />
              </div>
            </div>
            <LayoutTabs />
          </main>
        </div>
        <CommandWindow />
        <StatusBar />
      </div>
      <Taskbar />
    </div>
  );
}
